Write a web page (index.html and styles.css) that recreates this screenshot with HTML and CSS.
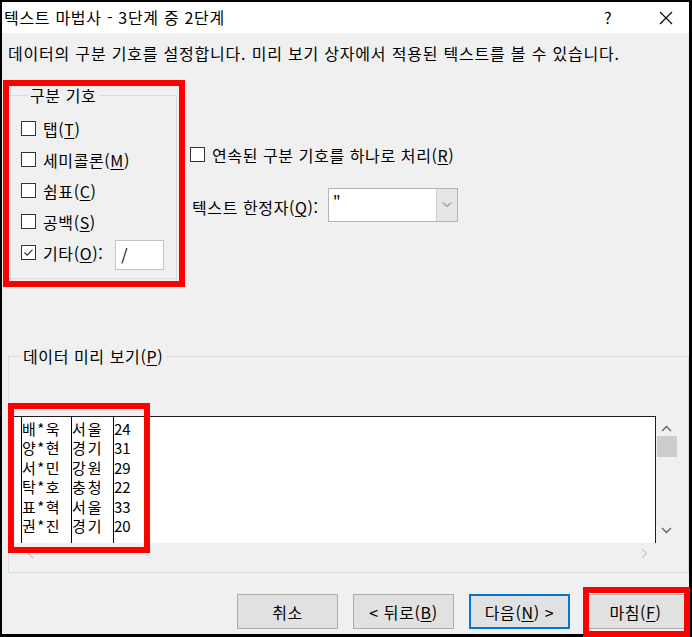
FILE: index.html
```html
<!DOCTYPE html>
<html lang="ko">
<head>
  <meta charset="UTF-8">
  <meta name="viewport" content="width=device-width, initial-scale=1.0">
  <title>텍스트 마법사 - 3단계 중 2단계</title>
  <link rel="stylesheet" href="styles.css">
</head>
<body>

  <div class="window">
    <!-- 제목 표시줄 -->
    <div class="titlebar">
      <span class="title">텍스트 마법사 - 3단계 중 2단계</span>
      <span class="help">?</span>
      <span class="close">
        <svg width="14" height="14" viewBox="0 0 14 14"><path d="M1 1L13 13M13 1L1 13" stroke="#000" stroke-width="1.1" fill="none"/></svg>
      </span>
    </div>

    <div class="content">
      <p class="desc">데이터의 구분 기호를 설정합니다. 미리 보기 상자에서 적용된 텍스트를 볼 수 있습니다.</p>

      <div class="options">
        <!-- 구분 기호 -->
        <div class="group delim">
          <div class="group-title">구분 기호</div>
          <div class="rows">
            <div class="check"><span class="box"></span>탭(<u>T</u>)</div>
            <div class="check"><span class="box"></span>세미콜론(<u>M</u>)</div>
            <div class="check"><span class="box"></span>쉼표(<u>C</u>)</div>
            <div class="check"><span class="box"></span>공백(<u>S</u>)</div>
            <div class="check">
              <span class="box">
                <svg width="13" height="13" viewBox="0 0 13 13"><path d="M2.5 6.5L5.2 9.2L10.5 3.6" stroke="#333" stroke-width="1.2" fill="none"/></svg>
              </span>기타(<u>O</u>):<span class="textbox">/</span>
            </div>
          </div>
        </div>

        <div class="side">
          <div class="check"><span class="box"></span>연속된 구분 기호를 하나로 처리(<u>R</u>)</div>
          <div class="qualifier">
            <span class="qualifier-label">텍스트 한정자(<u>Q</u>):</span>
            <div class="combo">
              <span class="combo-value">"</span>
              <span class="combo-drop">
                <svg width="10" height="6" viewBox="0 0 10 6"><path d="M1 0.5L5 4.5L9 0.5" stroke="#606060" stroke-width="1" fill="none"/></svg>
              </span>
            </div>
          </div>
        </div>
      </div>

      <!-- 데이터 미리 보기 -->
      <div class="group preview-group">
        <div class="group-title">데이터 미리 보기(<u>P</u>)</div>
        <div class="preview">
          <div class="preview-main">
            <div class="list">
              <div class="col c1">
                <div>배*욱</div><div>양*현</div><div>서*민</div><div>탁*호</div><div>표*혁</div><div>권*진</div>
              </div>
              <div class="col c2">
                <div>서울</div><div>경기</div><div>강원</div><div>충청</div><div>서울</div><div>경기</div>
              </div>
              <div class="col c3">
                <div>24</div><div>31</div><div>29</div><div>22</div><div>33</div><div>20</div>
              </div>
            </div>
            <div class="vscroll">
              <svg class="arrow" width="11" height="7" viewBox="0 0 11 7"><path d="M1 6L5.5 1.5L10 6" stroke="#606060" stroke-width="1.3" fill="none"/></svg>
              <div class="thumb"></div>
              <svg class="arrow down" width="11" height="7" viewBox="0 0 11 7"><path d="M1 1L5.5 5.5L10 1" stroke="#606060" stroke-width="1.3" fill="none"/></svg>
            </div>
          </div>
          <div class="hscroll">
            <svg width="7" height="11" viewBox="0 0 7 11"><path d="M6 1L1.5 5.5L6 10" stroke="#c8c8c8" stroke-width="1.2" fill="none"/></svg>
            <svg width="7" height="11" viewBox="0 0 7 11"><path d="M1 1L5.5 5.5L1 10" stroke="#c8c8c8" stroke-width="1.2" fill="none"/></svg>
          </div>
        </div>
      </div>

      <div class="buttons">
        <button>취소</button>
        <button>&lt; 뒤로(<u>B</u>)</button>
        <button class="default">다음(<u>N</u>) &gt;</button>
        <button>마침(<u>F</u>)</button>
      </div>
    </div>
  </div>

  <!-- 강조 표시 -->
  <div class="mark mark-delim"></div>
  <div class="mark mark-preview"></div>
  <div class="mark mark-finish"></div>

</body>
</html>
```

FILE: styles.css
```css
* {
  box-sizing: border-box;
}

body {
  margin: 0;
  background: #000;
  font-family: "Noto Sans CJK KR", "Noto Sans", sans-serif;
  font-size: 16px;
  letter-spacing: 0.6px;
  color: #000;
  height: 637px;
  overflow: hidden;
}

u {
  text-decoration: underline;
  text-underline-offset: 2px;
}

.window {
  margin: 2px 3px 3px 2px;
  height: 632px;
  background: #f0f0f0;
  display: flex;
  flex-direction: column;
}

/* 제목 표시줄 */
.titlebar {
  height: 31px;
  background: #fff;
  display: flex;
  align-items: center;
  padding-left: 2px;
  line-height: 31px;
}

.title {
  flex: 1;
  letter-spacing: 0.7px;
}

.help {
  width: 16px;
  text-align: center;
  margin-right: 27px;
}

.close {
  width: 46px;
  display: flex;
  justify-content: center;
  align-items: center;
}

.content {
  flex: 1;
  padding-left: 5px;
  display: flex;
  flex-direction: column;
}

.desc {
  margin: 10px 0 0 1px;
  line-height: 20px;
  letter-spacing: 0.8px;
}

/* 그룹 상자 */
.group {
  border: 1px solid #dcdcdc;
}

.group-title {
  display: table;
  margin: -11px 0 0 6px;
  padding: 0 3px;
  line-height: 20px;
  background: #f0f0f0;
}

.options {
  display: flex;
  margin-top: 32px;
}

.delim {
  width: 170px;
  height: 184px;
  padding-left: 13px;
}

.rows {
  margin-top: 8px;
}

.check {
  height: 31px;
  display: flex;
  align-items: center;
  white-space: nowrap;
}

.box {
  width: 15px;
  height: 15px;
  border: 1px solid #333;
  background: #fff;
  margin-right: 7px;
  display: flex;
  align-items: center;
  justify-content: center;
  flex: none;
}

.textbox {
  width: 49px;
  height: 30px;
  margin: 4px 0 0 12px;
  background: #fff;
  border: 1px solid #c4c4c4;
  padding-left: 5px;
  line-height: 28px;
}

.side {
  margin-left: 13px;
  padding-top: 44px;
}

.qualifier {
  display: flex;
  align-items: center;
  margin-top: 18px;
  padding-left: 2px;
}

.qualifier-label {
  width: 136px;
  margin-top: 4px;
}

.combo {
  width: 130px;
  height: 34px;
  border: 1px solid #b4b4b4;
  background: #fff;
  display: flex;
}

.combo-value {
  flex: 1;
  padding-left: 4px;
  line-height: 26px;
}

.combo-drop {
  width: 21px;
  background: #e5e5e5;
  border-left: 1px solid #cfcfcf;
  display: flex;
  align-items: center;
  justify-content: center;
}

/* 데이터 미리 보기 */
.preview-group {
  margin: 77px 0 0 1px;
  padding: 0 0 9px 5px;
}

.preview {
  margin-top: 50px;
  width: 663px;
}

.preview-main {
  display: flex;
  height: 127px;
}

.list {
  width: 642px;
  background: #fff;
  border-top: 1px solid #1e1e1e;
  border-right: 1px solid #1e1e1e;
  padding-left: 7px;
  display: flex;
  font-size: 15px;
  letter-spacing: 0;
}

.col {
  border-left: 1px solid #000;
  padding-top: 2px;
  line-height: 19.4px;
}

.c1 {
  width: 50px;
  letter-spacing: 1.5px;
}

.c2 {
  width: 42px;
  letter-spacing: 2px;
}

.c3 {
  width: 40px;
}

.vscroll {
  width: 21px;
  background: #f0f0f0;
  display: flex;
  flex-direction: column;
  align-items: center;
  padding-top: 9px;
}

.thumb {
  width: 20px;
  height: 21px;
  margin-top: 4px;
  background: #cdcdcd;
}

.arrow.down {
  margin-top: auto;
  margin-bottom: 9px;
}

.hscroll {
  height: 20px;
  width: 642px;
  display: flex;
  align-items: center;
  justify-content: space-between;
  padding: 0 8px 0 13px;
}

/* 버튼 */
.buttons {
  display: flex;
  justify-content: flex-end;
  gap: 15px;
  margin-top: 21px;
  padding-right: 3px;
}

button {
  width: 101px;
  height: 35px;
  font-family: inherit;
  font-size: 16px;
  letter-spacing: 0.6px;
  background: #e1e1e1;
  border: 1px solid #adadad;
  padding: 0;
  color: #000;
}

button.default {
  border: 2px solid #0078d7;
}

/* 빨간 강조 상자 */
.mark {
  position: absolute;
  border: 6px solid #ff0000;
}

.mark-delim {
  left: 3px;
  top: 80px;
  width: 182px;
  height: 207px;
}

.mark-preview {
  left: 8px;
  top: 403px;
  width: 142px;
  height: 150px;
}

.mark-finish {
  left: 583px;
  top: 587px;
  width: 107px;
  height: 50px;
}
```
